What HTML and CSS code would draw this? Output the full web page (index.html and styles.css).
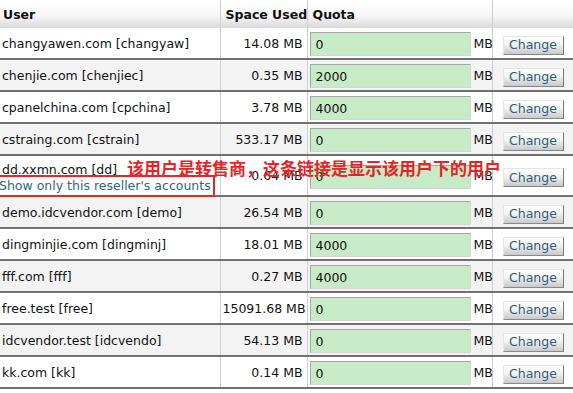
FILE: index.html
```html
<!DOCTYPE html>
<html lang="en">
<head>
    <meta charset="UTF-8">
    <title>List Accounts - Quota</title>
    <link rel="stylesheet" href="styles.css">
</head>
<body>
    <div class="page">
        <table class="accounts">
            <colgroup>
                <col class="col-user">
                <col class="col-space">
                <col class="col-quota">
                <col class="col-btn">
            </colgroup>
            <thead>
                <tr>
                    <th>User</th>
                    <th>Space Used</th>
                    <th>Quota</th>
                    <th></th>
                </tr>
            </thead>
            <tbody>
                <tr>
                    <td>changyawen.com [changyaw]</td>
                    <td class="space">14.08 MB</td>
                    <td class="quota"><input type="text" value="0"><span class="unit">MB</span></td>
                    <td><button class="btn">Change</button></td>
                </tr>
                <tr class="alt">
                    <td>chenjie.com [chenjiec]</td>
                    <td class="space">0.35 MB</td>
                    <td class="quota"><input type="text" value="2000"><span class="unit">MB</span></td>
                    <td><button class="btn">Change</button></td>
                </tr>
                <tr>
                    <td>cpanelchina.com [cpchina]</td>
                    <td class="space">3.78 MB</td>
                    <td class="quota"><input type="text" value="4000"><span class="unit">MB</span></td>
                    <td><button class="btn">Change</button></td>
                </tr>
                <tr class="alt">
                    <td>cstraing.com [cstrain]</td>
                    <td class="space">533.17 MB</td>
                    <td class="quota"><input type="text" value="0"><span class="unit">MB</span></td>
                    <td><button class="btn">Change</button></td>
                </tr>
                <tr class="reseller">
                    <td>
                        <div class="reseller-name">dd.xxmn.com [dd]</div>
                        <a href="#" class="reseller-link">Show only this reseller's accounts</a>
                    </td>
                    <td class="space">0.64 MB</td>
                    <td class="quota"><input type="text" value="0"><span class="unit">MB</span></td>
                    <td><button class="btn">Change</button></td>
                </tr>
                <tr class="alt">
                    <td>demo.idcvendor.com [demo]</td>
                    <td class="space">26.54 MB</td>
                    <td class="quota"><input type="text" value="0"><span class="unit">MB</span></td>
                    <td><button class="btn">Change</button></td>
                </tr>
                <tr>
                    <td>dingminjie.com [dingminj]</td>
                    <td class="space">18.01 MB</td>
                    <td class="quota"><input type="text" value="4000"><span class="unit">MB</span></td>
                    <td><button class="btn">Change</button></td>
                </tr>
                <tr class="alt">
                    <td>fff.com [fff]</td>
                    <td class="space">0.27 MB</td>
                    <td class="quota"><input type="text" value="4000"><span class="unit">MB</span></td>
                    <td><button class="btn">Change</button></td>
                </tr>
                <tr>
                    <td>free.test [free]</td>
                    <td class="space">15091.68 MB</td>
                    <td class="quota"><input type="text" value="0"><span class="unit">MB</span></td>
                    <td><button class="btn">Change</button></td>
                </tr>
                <tr class="alt">
                    <td>idcvendor.test [idcvendo]</td>
                    <td class="space">54.13 MB</td>
                    <td class="quota"><input type="text" value="0"><span class="unit">MB</span></td>
                    <td><button class="btn">Change</button></td>
                </tr>
                <tr>
                    <td>kk.com [kk]</td>
                    <td class="space">0.14 MB</td>
                    <td class="quota"><input type="text" value="0"><span class="unit">MB</span></td>
                    <td><button class="btn">Change</button></td>
                </tr>
            </tbody>
        </table>

        <!-- annotation drawn over the screenshot -->
        <div class="note">该用户是转售商，这条链接是显示该用户下的用户</div>
        <div class="note-box"></div>
    </div>
</body>
</html>
```

FILE: styles.css
```css
body {
    margin: 0;
    font-family: "DejaVu Sans", Verdana, sans-serif;
    font-size: 12.5px;
    color: #111;
    background: #fff;
}
.page {
    position: relative;
    width: 573px;
    overflow: hidden;
}
.accounts {
    width: 573px;
    border-collapse: collapse;
    table-layout: fixed;
}
.col-user { width: 220px; }
.col-space { width: 87px; }
.col-quota { width: 185px; }
.col-btn { width: 81px; }

.accounts th {
    height: 28px;
    padding: 0 3px 0 5px;
    text-align: left;
    font-weight: bold;
    background: linear-gradient(to bottom, #ffffff 0%, #f7f7f7 55%, #d9d9d9 100%);
    border-left: 1px solid #cfcfcf;
    white-space: nowrap;
}
.accounts th:first-child {
    padding-left: 3px;
}
.accounts th:first-child,
.accounts td:first-child {
    border-left: none;
}
.accounts td {
    height: 30px;
    padding: 0 2px;
    border-left: 1px solid #cfcfcf;
    border-bottom: 2px solid #707070;
    white-space: nowrap;
    vertical-align: middle;
}
.accounts tr.alt td {
    background: #f3f3f3;
}
.accounts tr.reseller td {
    height: 39px;
}
.space {
    text-align: right;
    padding-right: 4px !important;
}
.quota input {
    width: 161px;
    height: 24px;
    box-sizing: border-box;
    margin: 2px 0 0;
    padding: 0 5px;
    border: 1px solid #a6a6a6;
    border-right-color: #d6d6d6;
    border-bottom-color: #d6d6d6;
    background: #c7ebc7;
    font-family: "DejaVu Sans", Verdana, sans-serif;
    font-size: 12.5px;
    color: #111;
    vertical-align: middle;
}
.unit {
    display: inline-block;
    margin-left: 3px;
    vertical-align: middle;
}
.btn {
    display: block;
    margin: 4px 0 0 8px;
    width: 61px;
    height: 19px;
    padding: 0;
    border: 1px solid #e6e6e6;
    border-right-color: #777;
    border-bottom-color: #888;
    background: linear-gradient(to bottom, #ffffff 0%, #f1f1f1 45%, #c9c9c9 100%);
    font-family: "DejaVu Sans", Verdana, sans-serif;
    font-size: 12.5px;
    color: #2f5f78;
    line-height: 16px;
}
.reseller-name {
    line-height: 15px;
    margin-top: 4px;
}
.reseller-link {
    display: block;
    margin-left: -3px;
    line-height: 17px;
    color: #2b6a7e;
    text-decoration: none;
}
.note {
    position: absolute;
    left: 127px;
    top: 157px;
    font-family: "Noto Sans CJK SC", sans-serif;
    font-size: 17px;
    font-weight: bold;
    line-height: 22px;
    color: #e42525;
    white-space: nowrap;
}
.note-box {
    position: absolute;
    left: -3px;
    top: 175px;
    width: 214px;
    height: 18px;
    border: 2px solid #e02a2a;
}
```
